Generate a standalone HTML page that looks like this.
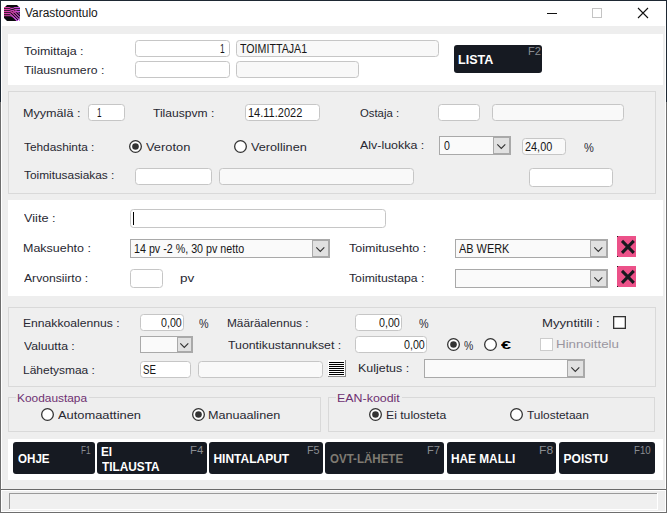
<!DOCTYPE html><html><head><meta charset='utf-8'><style>
*{margin:0;padding:0;box-sizing:content-box}
html,body{width:667px;height:513px;overflow:hidden;background:#eeeeee}
body{position:relative;font-family:"Liberation Sans", sans-serif}
div{position:absolute}
.t{white-space:pre;line-height:16px;transform-origin:0 0}
.in{border:1px solid #c6c6c6;border-radius:3.5px}
.cb{border:1px solid #a9a9a9}
.dd{position:absolute;right:0;top:0;border:1px solid #a9a9a9;background:#e1e1e1}
.rd{width:11px;height:11px;border:1px solid #333;border-radius:50%;background:#fff}
.dot{left:2px;top:2px;width:7px;height:7px;border-radius:50%;background:#333}
.ck{width:11px;height:11px;border:1px solid #333;background:#fff}
.bt{background:#161a22;border-radius:3px}
.box{border:1px solid #d9d9d9;background:#efefef}
.grp{border:1px solid #d9d9d9}
</style></head><body>
<div style='position:absolute;left:0px;top:0px;width:667px;height:513px;background:#eeeeee'></div>
<div style='position:absolute;left:1px;top:1px;width:665px;height:25px;background:#ffffff'></div>
<div style='position:absolute;left:0px;top:0px;width:667px;height:1px;background:#1e2833'></div>
<div style='position:absolute;left:0px;top:0px;width:1px;height:102px;background:#1e2833'></div>
<div style='position:absolute;left:666px;top:0px;width:1px;height:102px;background:#1e2833'></div>
<div style='position:absolute;left:0px;top:102px;width:1px;height:411px;background:#6e6e6e'></div>
<div style='position:absolute;left:666px;top:102px;width:1px;height:411px;background:#6e6e6e'></div>
<div style='position:absolute;left:0px;top:512px;width:667px;height:1px;background:#6e6e6e'></div>
<div style='position:absolute;left:1px;top:26px;width:1px;height:486px;background:#ffffff'></div>
<div style='position:absolute;left:665px;top:26px;width:1px;height:486px;background:#ffffff'></div>
<div style='position:absolute;left:1px;top:511px;width:665px;height:1px;background:#ffffff'></div>
<svg style='position:absolute;left:4px;top:5px' width='16' height='16' viewBox='0 0 16 16'><defs><linearGradient id='pg' x1='0' y1='0' x2='1' y2='0'><stop offset='0' stop-color='#e23f9c'/><stop offset='1' stop-color='#c452ea'/></linearGradient></defs><path d='M3,0 H13 L16,3 V13 L13,16 H3 L0,13 V3 Z' fill='#0b0b0e'/><g fill='none' stroke='url(#pg)' stroke-width='1.1'><path d='M0,2.6 H5.5 Q8,4.2 10.5,2.6 H16'/><path d='M0,4.6 H5.5 Q8.5,6.4 11,4.6 H16'/><path d='M0,6.6 H5.5 Q9,8 12,6.6 H16'/><path d='M0,8.6 H6 L13.4,16'/><path d='M0,10.6 H6 Q8,10.6 10,12.6 L13.4,16' stroke-opacity='0.8'/><path d='M7,6.6 L16,15.6'/><path d='M9,5.6 L16,12.6'/><path d='M11,4.6 L16,9.6' stroke-opacity='0.7'/></g></svg>
<div style='position:absolute;left:547px;top:13px;width:10px;height:1px;background:#111'></div>
<div style='position:absolute;left:592px;top:8px;width:8px;height:8px;border:1px solid #c4c4c4'></div>
<svg style='position:absolute;left:637px;top:7px' width='12' height='12'><path d='M1,1 L11,11 M11,1 L1,11' stroke='#111' stroke-width='1.1'/></svg>
<div style='position:absolute;left:8px;top:34px;width:655px;height:51px;background:#fff'></div>
<div class=in style='left:135px;top:40px;width:93px;height:15px;background:#fff'></div>
<div class=in style='left:135px;top:61px;width:93px;height:15px;background:#fff'></div>
<div class=in style='left:236px;top:40px;width:201px;height:15px;background:#f8f8f8'></div>
<div class=in style='left:236px;top:61px;width:121px;height:15px;background:#f8f8f8'></div>
<div class=bt style='left:454px;top:45px;width:88px;height:28px'></div>
<div class=box style='left:8px;top:91px;width:646px;height:101px'></div>
<div class=in style='left:88px;top:104px;width:35px;height:15px;background:#fff'></div>
<div class=in style='left:245px;top:104px;width:73px;height:15px;background:#fff'></div>
<div class=in style='left:438px;top:104px;width:40px;height:15px;background:#fff'></div>
<div class=in style='left:492px;top:104px;width:130px;height:15px;background:#f9f9f9'></div>
<svg style='position:absolute;left:129px;top:140px' width='13' height='13'><circle cx='6.5' cy='6.5' r='5.85' fill='#fff' stroke='#333' stroke-width='1.3'/><circle cx='6.5' cy='6.5' r='3.3' fill='#333'/></svg>
<svg style='position:absolute;left:234px;top:140px' width='13' height='13'><circle cx='6.5' cy='6.5' r='5.85' fill='#fff' stroke='#333' stroke-width='1.3'/></svg>
<div class=cb style='left:439px;top:136px;width:70px;height:17px;background:#fafafa'><div class=dd style='width:15px;height:15px;'><svg width='15' height='15' style='position:absolute;left:0;top:0'><polyline points='3.3,6.3 7.3,10.4 11.3,6.3' fill='none' stroke='#333' stroke-width='1.15'/></svg></div></div>
<div class=in style='left:522px;top:138px;width:42px;height:15px;background:#f9f9f9'></div>
<div class=in style='left:135px;top:168px;width:75px;height:15px;background:#fff'></div>
<div class=in style='left:219px;top:168px;width:193px;height:15px;background:#f9f9f9'></div>
<div class=in style='left:529px;top:168px;width:82px;height:17px;background:#fff'></div>
<div style='position:absolute;left:8px;top:200px;width:655px;height:96px;background:#fff'></div>
<div class=in style='left:130px;top:209px;width:254px;height:17px;background:#fff'></div>
<div style='position:absolute;left:133px;top:212px;width:1.4px;height:13px;background:#000'></div>
<div class=cb style='left:130px;top:239px;width:198px;height:17px;background:#fafafa'><div class=dd style='width:15px;height:15px;'><svg width='15' height='15' style='position:absolute;left:0;top:0'><polyline points='3.3,6.3 7.3,10.4 11.3,6.3' fill='none' stroke='#333' stroke-width='1.15'/></svg></div></div>
<div class=in style='left:130px;top:269px;width:31px;height:17px;background:#fff'></div>
<div class=cb style='left:455px;top:239px;width:151px;height:17px;background:#fafafa'><div class=dd style='width:15px;height:15px;'><svg width='15' height='15' style='position:absolute;left:0;top:0'><polyline points='3.3,6.3 7.3,10.4 11.3,6.3' fill='none' stroke='#333' stroke-width='1.15'/></svg></div></div>
<div class=cb style='left:455px;top:269px;width:151px;height:17px;background:#fafafa'><div class=dd style='width:15px;height:15px;'><svg width='15' height='15' style='position:absolute;left:0;top:0'><polyline points='3.3,6.3 7.3,10.4 11.3,6.3' fill='none' stroke='#333' stroke-width='1.15'/></svg></div></div>
<div style='position:absolute;left:617px;top:236px;width:19px;height:21px;background:#ec5189'><svg width='19' height='21' style='position:absolute;left:0;top:0'><path d='M5,4.9 L16.8,16.9 M16.8,4.9 L5,16.9' stroke='#18181f' stroke-width='3' stroke-linecap='butt'/></svg><div style="left:0;top:0;width:1px;height:1px;background:#222"></div><div style="left:0;top:20px;width:1px;height:1px;background:#222"></div></div>
<div style='position:absolute;left:617px;top:266px;width:19px;height:21px;background:#ec5189'><svg width='19' height='21' style='position:absolute;left:0;top:0'><path d='M5,4.9 L16.8,16.9 M16.8,4.9 L5,16.9' stroke='#18181f' stroke-width='3' stroke-linecap='butt'/></svg><div style="left:0;top:0;width:1px;height:1px;background:#222"></div><div style="left:0;top:20px;width:1px;height:1px;background:#222"></div></div>
<div class=box style='left:8px;top:307px;width:646px;height:78px'></div>
<div class=in style='left:140px;top:314px;width:42px;height:15px;background:#fff'></div>
<div class=cb style='left:140px;top:336px;width:51px;height:15px;background:#fafafa'><div class=dd style='width:13px;height:13px;'><svg width='13' height='13' style='position:absolute;left:0;top:0'><polyline points='2.3,5.3 6.3,9.4 10.3,5.3' fill='none' stroke='#333' stroke-width='1.15'/></svg></div></div>
<div class=in style='left:140px;top:361px;width:49px;height:15px;background:#fff'></div>
<div class=in style='left:198px;top:361px;width:123px;height:15px;background:#f9f9f9'></div>
<div style='position:absolute;left:328px;top:360px;width:17px;height:16px;background:#fff;border-right:1px solid #8a8a8a;border-bottom:1px solid #8a8a8a'><div style='position:absolute;left:1px;top:2px;width:15px;height:1px;background:#000'></div><div style='position:absolute;left:1px;top:4px;width:15px;height:1px;background:#000'></div><div style='position:absolute;left:1px;top:6px;width:15px;height:1px;background:#000'></div><div style='position:absolute;left:1px;top:8px;width:15px;height:1px;background:#000'></div><div style='position:absolute;left:1px;top:10px;width:15px;height:1px;background:#000'></div><div style='position:absolute;left:1px;top:12px;width:15px;height:1px;background:#000'></div><div style='position:absolute;left:1px;top:14px;width:15px;height:1px;background:#000'></div></div>
<div class=in style='left:355px;top:314px;width:45px;height:15px;background:#fff'></div>
<div class=in style='left:355px;top:336px;width:70px;height:15px;background:#fff'></div>
<svg style='position:absolute;left:447px;top:338px' width='13' height='13'><circle cx='6.5' cy='6.5' r='5.85' fill='#fff' stroke='#333' stroke-width='1.3'/><circle cx='6.5' cy='6.5' r='3.3' fill='#333'/></svg>
<svg style='position:absolute;left:484px;top:338px' width='13' height='13'><circle cx='6.5' cy='6.5' r='5.85' fill='#fff' stroke='#333' stroke-width='1.3'/></svg>
<svg style='position:absolute;left:613px;top:316px' width='13' height='13'><rect x='0.65' y='0.65' width='11.7' height='11.7' fill='#fff' stroke='#333' stroke-width='1.3'/></svg>
<svg style='position:absolute;left:540px;top:338px' width='13' height='13'><rect x='0.5' y='0.5' width='12' height='12' fill='#fff' stroke='#cccccc' stroke-width='1'/></svg>
<div class=cb style='left:424px;top:359px;width:159px;height:17px;background:#fafafa'><div class=dd style='width:15px;height:15px;'><svg width='15' height='15' style='position:absolute;left:0;top:0'><polyline points='3.3,6.3 7.3,10.4 11.3,6.3' fill='none' stroke='#333' stroke-width='1.15'/></svg></div></div>
<div class=grp style='left:8px;top:397px;width:311px;height:33px'></div>
<div style='position:absolute;left:16px;top:395px;width:73px;height:4px;background:#eeeeee'></div>
<div class=grp style='left:328px;top:397px;width:325px;height:33px'></div>
<div style='position:absolute;left:336px;top:395px;width:66px;height:4px;background:#eeeeee'></div>
<svg style='position:absolute;left:41px;top:408px' width='13' height='13'><circle cx='6.5' cy='6.5' r='5.85' fill='#fff' stroke='#333' stroke-width='1.3'/></svg>
<svg style='position:absolute;left:192px;top:408px' width='13' height='13'><circle cx='6.5' cy='6.5' r='5.85' fill='#fff' stroke='#333' stroke-width='1.3'/><circle cx='6.5' cy='6.5' r='3.3' fill='#333'/></svg>
<svg style='position:absolute;left:369px;top:408px' width='13' height='13'><circle cx='6.5' cy='6.5' r='5.85' fill='#fff' stroke='#333' stroke-width='1.3'/><circle cx='6.5' cy='6.5' r='3.3' fill='#333'/></svg>
<svg style='position:absolute;left:510px;top:408px' width='13' height='13'><circle cx='6.5' cy='6.5' r='5.85' fill='#fff' stroke='#333' stroke-width='1.3'/></svg>
<div style='position:absolute;left:8px;top:439px;width:655px;height:41px;background:#fff'></div>
<div class=bt style='left:13px;top:442px;width:82px;height:32px'></div>
<div class=bt style='left:97px;top:442px;width:110px;height:32px'></div>
<div class=bt style='left:209px;top:442px;width:114px;height:32px'></div>
<div class=bt style='left:325px;top:442px;width:119px;height:32px'></div>
<div class=bt style='left:447px;top:442px;width:109px;height:32px'></div>
<div class=bt style='left:559px;top:442px;width:96px;height:32px'></div>
<div style='position:absolute;left:1px;top:489px;width:665px;height:1px;background:#6a6a6a'></div>
<div style='position:absolute;left:1px;top:490px;width:665px;height:1px;background:#ffffff'></div>
<div style='position:absolute;left:9px;top:493px;width:648px;height:16px;background:#f0f0f0'></div>
<div style='position:absolute;left:9px;top:493px;width:648px;height:1px;background:#9a9a9a'></div>
<div style='position:absolute;left:9px;top:493px;width:1px;height:16px;background:#9a9a9a'></div>
<div style='position:absolute;left:9px;top:509px;width:649px;height:1px;background:#ffffff'></div>
<div style='position:absolute;left:657px;top:493px;width:1px;height:17px;background:#ffffff'></div>
<div class=t style='left:25.00px;top:5px;font-size:12px;color:#161616;transform:scaleX(0.9932);'>Varastoontulo</div>
<div class=t style='left:24.40px;top:43px;font-size:11px;color:#282832;transform:scaleX(1.1327);'>Toimittaja :</div>
<div class=t style='left:24.20px;top:62px;font-size:11px;color:#282832;transform:scaleX(1.1099);'>Tilausnumero :</div>
<div class=t style='left:23.25px;top:105px;font-size:11px;color:#282832;transform:scaleX(1.1458);'>Myymälä :</div>
<div class=t style='left:152.80px;top:105px;font-size:11px;color:#282832;transform:scaleX(1.0982);'>Tilauspvm :</div>
<div class=t style='left:360.20px;top:105px;font-size:11px;color:#282832;transform:scaleX(1.0297);'>Ostaja :</div>
<div class=t style='left:24.30px;top:139px;font-size:11px;color:#282832;transform:scaleX(1.0754);'>Tehdashinta :</div>
<div class=t style='left:145.80px;top:139px;font-size:11px;color:#282832;transform:scaleX(1.1676);'>Veroton</div>
<div class=t style='left:250.60px;top:139px;font-size:11px;color:#282832;transform:scaleX(1.1542);'>Verollinen</div>
<div class=t style='left:360.20px;top:137px;font-size:11px;color:#282832;transform:scaleX(1.1304);'>Alv-luokka :</div>
<div class=t style='left:583.80px;top:140px;font-size:12px;color:#282832;transform:scaleX(0.9200);'>%</div>
<div class=t style='left:24.40px;top:167px;font-size:11px;color:#282832;transform:scaleX(1.0795);'>Toimitusasiakas :</div>
<div class=t style='left:24.30px;top:210px;font-size:11px;color:#282832;transform:scaleX(1.1538);'>Viite :</div>
<div class=t style='left:23.17px;top:240px;font-size:11px;color:#282832;transform:scaleX(1.1328);'>Maksuehto :</div>
<div class=t style='left:24.20px;top:270px;font-size:11px;color:#282832;transform:scaleX(1.1053);'>Arvonsiirto :</div>
<div class=t style='left:179.57px;top:270px;font-size:11px;color:#282832;transform:scaleX(1.2300);'>pv</div>
<div class=t style='left:348.60px;top:240px;font-size:11px;color:#282832;transform:scaleX(1.1388);'>Toimitusehto :</div>
<div class=t style='left:348.60px;top:270px;font-size:11px;color:#282832;transform:scaleX(1.1119);'>Toimitustapa :</div>
<div class=t style='left:23.30px;top:315px;font-size:11px;color:#282832;transform:scaleX(1.1035);'>Ennakkoalennus :</div>
<div class=t style='left:24.40px;top:338px;font-size:11px;color:#282832;transform:scaleX(1.1111);'>Valuutta :</div>
<div class=t style='left:23.31px;top:362px;font-size:11px;color:#282832;transform:scaleX(1.0891);'>Lähetysmaa :</div>
<div class=t style='left:199.20px;top:316px;font-size:12px;color:#282832;transform:scaleX(0.9000);'>%</div>
<div class=t style='left:226.52px;top:315px;font-size:11px;color:#282832;transform:scaleX(1.0757);'>Määräalennus :</div>
<div class=t style='left:227.60px;top:337px;font-size:11px;color:#282832;transform:scaleX(1.1200);'>Tuontikustannukset :</div>
<div class=t style='left:419.20px;top:316px;font-size:12px;color:#282832;transform:scaleX(0.9000);'>%</div>
<div class=t style='left:464.30px;top:338px;font-size:12px;color:#282832;transform:scaleX(0.8700);'>%</div>
<div class=t style='left:500.70px;top:338px;font-size:10px;font-weight:700;color:#000;transform:scaleX(1.8000);'>€</div>
<div class=t style='left:542.30px;top:315px;font-size:11px;color:#282832;transform:scaleX(1.1957);'>Myyntitili :</div>
<div class=t style='left:556.49px;top:336px;font-size:11px;color:#9a96a0;transform:scaleX(1.2120);'>Hinnoittelu</div>
<div class=t style='left:357.57px;top:360px;font-size:11px;color:#282832;transform:scaleX(1.1302);'>Kuljetus :</div>
<div class=t style='left:16.52px;top:390px;font-size:11px;color:#6e3172;transform:scaleX(1.0812);'>Koodaustapa</div>
<div class=t style='left:58.10px;top:407px;font-size:11px;color:#282832;transform:scaleX(1.1700);'>Automaattinen</div>
<div class=t style='left:208.15px;top:407px;font-size:11px;color:#282832;transform:scaleX(1.1459);'>Manuaalinen</div>
<div class=t style='left:336.57px;top:390px;font-size:11px;color:#6e3172;transform:scaleX(1.1291);'>EAN-koodit</div>
<div class=t style='left:385.89px;top:407px;font-size:11px;color:#282832;transform:scaleX(1.1075);'>Ei tulosteta</div>
<div class=t style='left:527.00px;top:407px;font-size:11px;color:#282832;transform:scaleX(1.0825);'>Tulostetaan</div>
<div class=t style='left:219.60px;top:41px;font-size:12px;color:#161616;transform:scaleX(0.7000);'>1</div>
<div class=t style='left:240.20px;top:41px;font-size:12px;color:#161616;transform:scaleX(0.8880);'>TOIMITTAJA1</div>
<div class=t style='left:97.12px;top:105px;font-size:12px;color:#161616;transform:scaleX(0.6800);'>1</div>
<div class=t style='left:247.88px;top:105px;font-size:12px;color:#161616;transform:scaleX(0.9172);'>14.11.2022</div>
<div class=t style='left:444.20px;top:138px;font-size:12px;color:#161616;transform:scaleX(0.8833);'>0</div>
<div class=t style='left:524.89px;top:139px;font-size:12px;color:#161616;transform:scaleX(0.9069);'>24,00</div>
<div class=t style='left:134.31px;top:241px;font-size:12px;color:#161616;transform:scaleX(0.8926);'>14 pv -2 %, 30 pv netto</div>
<div class=t style='left:459.00px;top:241px;font-size:12px;color:#161616;transform:scaleX(0.9091);'>AB WERK</div>
<div class=t style='left:160.80px;top:315px;font-size:12px;color:#161616;transform:scaleX(0.8870);'>0,00</div>
<div class=t style='left:378.70px;top:315px;font-size:12px;color:#161616;transform:scaleX(0.8913);'>0,00</div>
<div class=t style='left:403.80px;top:337px;font-size:12px;color:#161616;transform:scaleX(0.8913);'>0,00</div>
<div class=t style='left:143.09px;top:362px;font-size:12px;color:#161616;transform:scaleX(0.8067);'>SE</div>
<div class=t style='left:458.26px;top:52px;font-size:12px;font-weight:700;color:#fff;transform:scaleX(1.0437);'>LISTA</div>
<div class=t style='left:18.20px;top:451px;font-size:12px;font-weight:700;color:#fff;transform:scaleX(0.9656);'>OHJE</div>
<div class=t style='left:101.22px;top:444px;font-size:12px;font-weight:700;color:#fff;transform:scaleX(0.9800);'>EI</div>
<div class=t style='left:102.20px;top:459px;font-size:12px;font-weight:700;color:#fff;transform:scaleX(0.9862);'>TILAUSTA</div>
<div class=t style='left:213.40px;top:451px;font-size:12px;font-weight:700;color:#fff;'>HINTALAPUT</div>
<div class=t style='left:330.10px;top:451px;font-size:12px;font-weight:700;color:#7f7a72;transform:scaleX(0.9618);'>OVT-LÄHETE</div>
<div class=t style='left:451.21px;top:451px;font-size:12px;font-weight:700;color:#fff;transform:scaleX(0.9859);'>HAE MALLI</div>
<div class=t style='left:563.60px;top:451px;font-size:12px;font-weight:700;color:#fff;'>POISTU</div>
<div class=t style='left:527.79px;top:44px;font-size:10px;color:#8a8d92;transform:scaleX(1.1100);'>F2</div>
<div class=t style='left:80.99px;top:443px;font-size:10px;color:#8a8d92;transform:scaleX(0.8100);'>F1</div>
<div class=t style='left:190.06px;top:443px;font-size:10px;color:#8a8d92;transform:scaleX(1.1400);'>F4</div>
<div class=t style='left:306.82px;top:443px;font-size:10px;color:#8a8d92;transform:scaleX(1.0800);'>F5</div>
<div class=t style='left:427.09px;top:443px;font-size:10px;color:#8a8d92;transform:scaleX(1.1100);'>F7</div>
<div class=t style='left:538.59px;top:443px;font-size:10px;color:#8a8d92;transform:scaleX(1.2100);'>F8</div>
<div class=t style='left:634.04px;top:443px;font-size:10px;color:#8a8d92;transform:scaleX(0.9625);'>F10</div>
</body></html>
